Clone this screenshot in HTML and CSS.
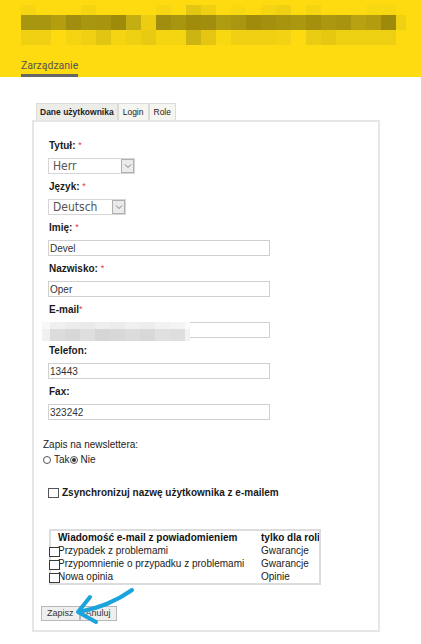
FILE: index.html
```html
<!DOCTYPE html>
<html lang="pl">
<head>
    <meta charset="UTF-8">
    <meta name="viewport" content="width=device-width, initial-scale=1.0">
    <title>Zarządzanie - Dane użytkownika</title>
    <link rel="stylesheet" href="styles.css">
</head>
<body>
    <div class="topbar">
        <div class="mosaic" id="brand"></div>
        <nav class="topnav"><a href="#" class="topnav-link">Zarządzanie</a></nav>
    </div>

    <div class="page">
        <ul class="tabs">
            <li class="tab active">Dane użytkownika</li>
            <li class="tab">Login</li>
            <li class="tab">Role</li>
        </ul>

        <div class="panel">
            <form class="user-form">
                <div class="fields">
                    <div class="field">
                        <label class="field-label">Tytuł: <span class="req">*</span></label>
                        <div class="select select-title">
                            <span class="select-value">Herr</span>
                            <span class="select-arrow"><svg width="8" height="6" viewBox="0 0 8 6"><polyline points="1,1.5 4,4.5 7,1.5" fill="none" stroke="#808080" stroke-width="1"/></svg></span>
                        </div>
                    </div>
                    <div class="field">
                        <label class="field-label">Język: <span class="req">*</span></label>
                        <div class="select select-lang">
                            <span class="select-value">Deutsch</span>
                            <span class="select-arrow"><svg width="8" height="6" viewBox="0 0 8 6"><polyline points="1,1.5 4,4.5 7,1.5" fill="none" stroke="#808080" stroke-width="1"/></svg></span>
                        </div>
                    </div>
                    <div class="field">
                        <label class="field-label">Imię: <span class="req">*</span></label>
                        <input type="text" class="text-input" value="Devel">
                    </div>
                    <div class="field">
                        <label class="field-label">Nazwisko: <span class="req">*</span></label>
                        <input type="text" class="text-input" value="Oper">
                    </div>
                    <div class="field">
                        <label class="field-label">E-mail<span class="req">*</span></label>
                        <div class="masked">
                            <input type="text" class="text-input" value="">
                            <div class="mask" id="email-mask"></div>
                        </div>
                    </div>
                    <div class="field">
                        <label class="field-label">Telefon:</label>
                        <input type="text" class="text-input" value="13443">
                    </div>
                    <div class="field">
                        <label class="field-label">Fax:</label>
                        <input type="text" class="text-input" value="323242">
                    </div>
                </div>

                <div class="newsletter">
                    <div class="newsletter-label">Zapis na newslettera:</div>
                    <div class="radio-row">
                        <span class="radio"></span><span class="radio-text">Tak</span><span class="radio checked"></span><span class="radio-text">Nie</span>
                    </div>
                </div>

                <div class="sync">
                    <span class="box"></span>Zsynchronizuj nazwę użytkownika z e-mailem
                </div>

                <table class="notify">
                    <colgroup>
                        <col class="col-check">
                        <col class="col-name">
                        <col class="col-role">
                    </colgroup>
                    <tr>
                        <th></th>
                        <th>Wiadomość e-mail z powiadomieniem</th>
                        <th class="role">tylko dla roli</th>
                    </tr>
                    <tr>
                        <td><span class="box small"></span></td>
                        <td>Przypadek z problemami</td>
                        <td class="role">Gwarancje</td>
                    </tr>
                    <tr>
                        <td><span class="box small"></span></td>
                        <td>Przypomnienie o przypadku z problemami</td>
                        <td class="role">Gwarancje</td>
                    </tr>
                    <tr>
                        <td><span class="box small"></span></td>
                        <td>Nowa opinia</td>
                        <td class="role">Opinie</td>
                    </tr>
                </table>

                <div class="actions">
                    <button type="button" class="btn">Zapisz</button>
                    <button type="button" class="btn">Anuluj</button>
                </div>
            </form>
        </div>
    </div>

    <svg class="pointer-arrow" width="70" height="45" viewBox="0 0 70 45">
        <path d="M62,7 C48,17 30,25 9,29" fill="none" stroke="#19a4dc" stroke-width="4" stroke-linecap="round"/>
        <path d="M20,14 L8,29 L26,39" fill="none" stroke="#19a4dc" stroke-width="4" stroke-linecap="round" stroke-linejoin="round"/>
    </svg>

    <script>
        // pixelated logo strip in the header
        const Y = '#fddb10';
        const brandRows = [
            { h: 10, c: ['#f6d512', Y, Y, Y, '#f5d412', Y, Y, Y, Y, '#f6d512', Y, '#e2c612', '#f0d012', Y, '#f8d810', Y, '#f5d412', '#f0d012', Y, '#f5d412', Y, Y, Y, '#f8d810', '#f8d810', Y] },
            { h: 15, c: ['#a89510', '#a89510', '#b49e10', '#a28e0e', '#a99610', '#a8940e', '#9e8b0a', '#c4ae12', '#edcd12', '#a28e0e', '#a89510', '#a08c0a', '#a28e0e', '#b09c10', '#aa9610', '#a08c0a', '#a4900e', '#a8940e', '#ac9810', '#a4900c', '#ac9810', '#a8940e', '#b8a212', '#b49c10', '#9e8a0a', '#f0d012'] },
            { h: 15, c: ['#f0d012', '#f0d012', Y, '#f5d412', '#f0d012', '#e2c512', '#f5d412', '#f0d012', '#e8ca12', '#f5d412', '#f5d412', '#ccb412', '#e4c612', '#f8d810', '#f0d012', '#f0d012', '#f0d012', '#f2d212', Y, '#eacc12', '#e6c812', '#eed012', '#eed012', '#eed012', '#eed012', Y] }
        ];
        const brand = document.getElementById('brand');
        brandRows.forEach(function (row) {
            const line = document.createElement('div');
            line.className = 'mosaic-row';
            row.c.forEach(function (color, i) {
                const tile = document.createElement('span');
                tile.style.background = color;
                tile.style.height = row.h + 'px';
                if (i === row.c.length - 1) tile.style.width = '10px';
                line.appendChild(tile);
            });
            brand.appendChild(line);
        });

        // blurred e-mail address
        const maskWidths = [8, 15, 15, 15, 15, 15, 15, 15, 15, 15, 5];
        const maskRows = [
            { h: 7, c: ['#f8f8f8', '#f0f0f0', '#ececec', '#eaeaea', '#eeeeee', '#ececec', '#f0f0f0', '#ededed', '#f2f2f2', '#f4f4f4', '#fafafa'] },
            { h: 12, c: ['#f0f0f0', '#dcdcdc', '#d8d8d8', '#dedede', '#d6d6d6', '#d8d8d8', '#dcdcdc', '#d8d8d8', '#e0e0e0', '#dedede', '#f2f2f2'] }
        ];
        const mask = document.getElementById('email-mask');
        maskRows.forEach(function (row) {
            const line = document.createElement('div');
            line.className = 'mosaic-row';
            row.c.forEach(function (color, i) {
                const tile = document.createElement('span');
                tile.style.background = color;
                tile.style.height = row.h + 'px';
                tile.style.width = maskWidths[i] + 'px';
                line.appendChild(tile);
            });
            mask.appendChild(line);
        });
    </script>
</body>
</html>
```

FILE: styles.css
```css
body {
    margin: 0;
    background-color: #ffffff;
    font-family: "Liberation Sans", Arial, sans-serif;
    font-size: 10px;
    color: #222222;
    position: relative;
}

/* header */
.topbar {
    height: 77px;
    box-sizing: border-box;
    padding: 5px 0 0 21px;
    background-color: #fddb10;
}

.mosaic {
    display: flex;
    flex-direction: column;
}

.mosaic-row {
    display: flex;
}

.mosaic-row span {
    flex: none;
    width: 15px;
}

.topnav {
    margin-top: 14px;
}

.topnav-link {
    display: inline-block;
    font-family: Roboto, "Liberation Sans", sans-serif;
    font-size: 10.5px;
    line-height: 13px;
    color: #555550;
    text-decoration: none;
    padding-bottom: 2px;
    border-bottom: 3px solid #666666;
}

/* tabs + panel */
.page {
    padding: 26px 0 0 32px;
}

.tabs {
    list-style: none;
    margin: 0 0 0 4px;
    padding: 0;
    display: flex;
    font-size: 8.5px;
}

.tab {
    padding: 0 4px;
    line-height: 16px;
    border: 1px solid #dcdcd6;
    border-bottom: 0;
    background-color: #f5f5f1;
    color: #222222;
}

.tab.active {
    font-weight: bold;
    padding: 0 3px;
    background-color: #ececE8;
}

.panel {
    width: 348px;
    box-sizing: border-box;
    border: 2px solid #e6e6e6;
    padding: 17px 0 9px 7px;
}

/* form fields */
.fields {
    margin-left: 7px;
}

.field {
    display: flex;
    flex-direction: column;
    align-items: flex-start;
    margin-bottom: 6px;
}

.field-label {
    font-weight: bold;
    line-height: 13px;
    padding-left: 1px;
    margin-bottom: 6px;
    color: #1a1a1a;
}

.req {
    color: #e8323c;
    font-weight: normal;
    font-size: 9px;
    vertical-align: top;
}

.select {
    display: flex;
    align-items: center;
    height: 16px;
    box-sizing: border-box;
    border: 1px solid #d6d6d6;
    font-family: "DejaVu Sans Condensed", "DejaVu Sans", sans-serif;
    font-stretch: condensed;
    font-size: 12px;
    color: #555555;
}

.select-title {
    width: 87px;
}

.select-lang {
    width: 78px;
}

.select-value {
    flex: 1;
    padding-left: 4px;
    line-height: 14px;
}

.select-arrow {
    width: 13px;
    height: 14px;
    box-sizing: border-box;
    border: 1px solid #b0b0b0;
    background-color: #ebebeb;
    display: flex;
    align-items: center;
    justify-content: center;
}

.text-input {
    display: block;
    width: 222px;
    height: 16px;
    box-sizing: border-box;
    margin: 0;
    padding: 0 1px;
    border: 1px solid #d0d0d0;
    font-family: "Liberation Sans", Arial, sans-serif;
    font-size: 10px;
    color: #333333;
    background-color: #ffffff;
}

.masked {
    position: relative;
}

.mask {
    position: absolute;
    left: -6px;
    top: 0;
}

/* newsletter */
.newsletter {
    margin: 18px 0 0 2px;
    line-height: 13px;
    color: #222222;
}

.radio-row {
    display: flex;
    align-items: center;
    height: 13px;
    margin-top: 2px;
}

.radio {
    width: 8px;
    height: 8px;
    box-sizing: border-box;
    border: 1px solid #555555;
    border-radius: 50%;
    margin-right: 3px;
    display: flex;
    align-items: center;
    justify-content: center;
}

.radio.checked::after {
    content: "";
    width: 4px;
    height: 4px;
    border-radius: 50%;
    background-color: #333333;
}

.sync {
    margin: 20px 0 0 7px;
    display: flex;
    align-items: center;
    line-height: 13px;
    font-weight: bold;
    color: #1a1a1a;
}

.box {
    display: block;
    width: 11px;
    height: 10px;
    box-sizing: border-box;
    border: 1px solid #555555;
    margin-right: 3px;
    background-color: #ffffff;
}

/* notification table */
.notify {
    margin: 30px 0 0 8px;
    width: 272px;
    table-layout: fixed;
    border-collapse: collapse;
    border: 2px solid #dcdcdc;
    font-size: 10px;
    color: #222222;
}

.col-check {
    width: 8px;
}

.col-name {
    width: 203px;
}

.notify th,
.notify td {
    padding: 0;
    height: 13px;
    line-height: 13px;
    text-align: left;
    white-space: nowrap;
    vertical-align: top;
}

.notify th {
    font-weight: bold;
    color: #111111;
}

.notify .role {
    overflow: hidden;
}

.box.small {
    position: relative;
    width: 11px;
    height: 10px;
    margin: 3px 0 0 -2px;
    border-color: #3a3a3a;
}

/* buttons */
.actions {
    margin-top: 21px;
    display: flex;
}

.btn {
    height: 15px;
    margin: 0;
    padding: 0 5px;
    border: 1px solid #b8b8b8;
    background-color: #efefef;
    font-family: "Liberation Sans", Arial, sans-serif;
    font-size: 9px;
    line-height: 13px;
    color: #333333;
}

.pointer-arrow {
    position: absolute;
    left: 70px;
    top: 583px;
}
```
